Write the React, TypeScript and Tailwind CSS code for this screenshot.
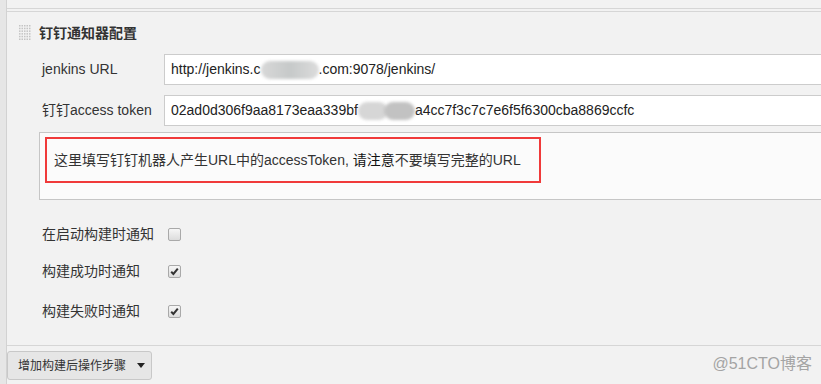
import type { ReactNode } from 'react'

const font = { fontFamily: '"Liberation Sans", "Noto Sans CJK SC", sans-serif' }

const Grip = () => (
  <svg width="12" height="16" viewBox="0 0 12 16" aria-hidden>
    {Array.from({ length: 6 }).map((_, r) =>
      Array.from({ length: 5 }).map((_, c) => (
        <rect key={`${r}-${c}`} x={c * 2.5} y={r * 2.7} width="1.5" height="1.5" fill="#c4c4c4" />
      )),
    )}
  </svg>
)

const Blob = ({ className }: { className: string }) => (
  <span className={`inline-block h-[18px] shrink-0 rounded-full blur-[1.5px] align-middle ${className}`} />
)

const Check = ({ checked }: { checked?: boolean }) => (
  <div className="flex h-[13px] w-[13px] items-center justify-center rounded-[2px] border border-[#a9a9a9] bg-gradient-to-b from-[#f6f6f6] to-[#dcdcdc]">
    {checked ? (
      <svg width="9" height="9" viewBox="0 0 9 9" aria-hidden>
        <path d="M1.2 4.8 L3.4 7 L7.8 1.6" fill="none" stroke="#333" strokeWidth="2" />
      </svg>
    ) : null}
  </div>
)

const Field = ({ label, children }: { label: string; children: ReactNode }) => (
  <div className="flex h-[31px] items-center">
    <div className="box-content w-[122px] shrink-0 pl-[35px] text-[14px] text-[#333]">{label}</div>
    <div className="flex h-[31px] w-[700px] shrink-0 items-center whitespace-nowrap border border-[#cccccc] bg-white pl-[6px] text-[14px] text-[#222]">
      {children}
    </div>
  </div>
)

const CheckRow = ({ label, checked, className }: { label: string; checked?: boolean; className: string }) => (
  <div className={`flex h-[20px] items-center ${className}`}>
    <div className="box-content w-[122px] shrink-0 pl-[35px] text-[14px] text-[#333]">{label}</div>
    <div className="pl-[4px]">
      <Check checked={checked} />
    </div>
  </div>
)

export default function App() {
  return (
    <div className="relative flex h-[384px] w-[821px] overflow-hidden bg-[#f2f2f2]" style={font}>
      <div className="w-[7px] shrink-0 border-r border-[#d2d2d2] bg-[#e6e6e6]" />
      <div className="flex min-w-0 flex-1 flex-col">
        <div className="h-[9px] shrink-0 border-b border-[#d6d6d6]" />
        <div className="mt-[2px] h-[335px] shrink-0 overflow-hidden border-y border-[#d6d6d6]">
          <div className="mt-[13px] flex h-[16px] items-center">
            <div className="ml-[12px]">
              <Grip />
            </div>
            <div className="ml-[8px] text-[14px] font-bold text-[#333]">钉钉通知器配置</div>
          </div>

          <div className="mt-[13px] flex flex-col gap-[10px]">
            <Field label="jenkins URL">
              <span>http://jenkins.c</span>
              <Blob className="w-[58px] bg-gradient-to-r from-[#d8d8d8] via-[#c6c9c9] to-[#dcdcdc]" />
              <span>.com:9078/jenkins/</span>
            </Field>
            <Field label="钉钉access token">
              <span>02ad0d306f9aa8173eaa339bf</span>
              <span className="inline-flex w-[57px] shrink-0 items-center">
                <Blob className="w-[30px] bg-[#d6d6d6]" />
                <Blob className="-ml-[4px] w-[31px] bg-[#c2c2c2]" />
              </span>
              <span>a4cc7f3c7c7e6f5f6300cba8869ccfc</span>
            </Field>
          </div>

          <div className="ml-[32px] mt-[6px] h-[68px] w-[800px] border border-[#c6c6c6] bg-[#fbfbfb] pl-[5px] pt-[4px]">
            <div className="flex h-[46px] w-[496px] items-center whitespace-pre border-2 border-[#f03a3a] pl-[7px] text-[14px] text-[#333]">
              <span>这里填写钉钉机器人产生URL中的accessToken, </span>
              <span className="text-[#111]">请注意</span>
              <span>不要填写完整的URL</span>
            </div>
          </div>

          <CheckRow label="在启动构建时通知" className="mt-[24px]" />
          <CheckRow label="构建成功时通知" checked className="mt-[17px]" />
          <CheckRow label="构建失败时通知" checked className="mt-[20px]" />
        </div>

        <div className="mt-[5px] flex h-[29px] w-[145px] items-center rounded-[3px] border border-[#c8c8c8] bg-[#e6e6e6] pl-[10px] text-[12px] text-[#333]">
          增加构建后操作步骤
          <svg className="ml-[11px]" width="8" height="5" viewBox="0 0 8 5" aria-hidden>
            <path d="M0 0 H8 L4 5 Z" fill="#222" />
          </svg>
        </div>
      </div>

      <div className="absolute bottom-[8px] right-[9px] text-[16px] text-[#a4a4a4]">@51CTO博客</div>
    </div>
  )
}
